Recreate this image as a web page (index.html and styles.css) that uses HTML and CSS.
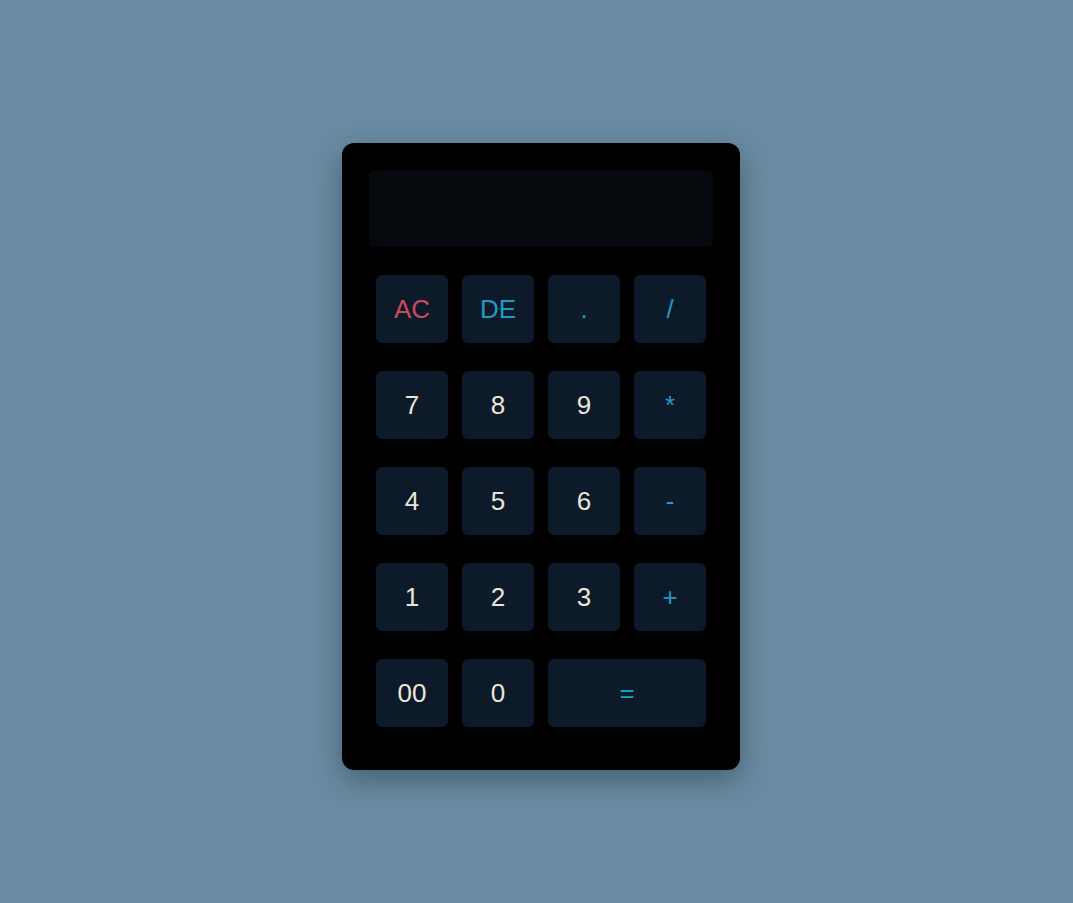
FILE: index.html
```html
<!DOCTYPE html>
<html>
<head>
<meta charset="utf-8">
<link rel="stylesheet" href="styles.css">
</head>
<body>
<div class="page">
  <div class="calculator">
    <div class="display"></div>
    <div class="keys">
      <button class="key clear">AC</button>
      <button class="key op">DE</button>
      <button class="key op">.</button>
      <button class="key op">/</button>
      <button class="key">7</button>
      <button class="key">8</button>
      <button class="key">9</button>
      <button class="key op">*</button>
      <button class="key">4</button>
      <button class="key">5</button>
      <button class="key">6</button>
      <button class="key op">-</button>
      <button class="key">1</button>
      <button class="key">2</button>
      <button class="key">3</button>
      <button class="key op">+</button>
      <button class="key">00</button>
      <button class="key">0</button>
      <button class="key op wide">=</button>
    </div>
  </div>
</div>
</body>
</html>
```
FILE: styles.css
```css
html, body {
  margin: 0;
  padding: 0;
  background: #6a8ca2;
}
.page {
  box-sizing: border-box;
  height: 903px;
  display: flex;
  align-items: center;
  justify-content: center;
  padding: 10px 0 0 9px;
}
.calculator {
  box-sizing: border-box;
  width: 398px;
  height: 627px;
  background: #000;
  border-radius: 12px;
  padding: 27px 27px 42px;
  box-shadow: 0 10px 30px rgba(20, 40, 60, 0.45);
}
.display {
  height: 77px;
  background: #05080c;
  border-radius: 6px;
}
.keys {
  margin: 28px 7px 0;
  display: grid;
  grid-template-columns: repeat(4, 72px);
  grid-auto-rows: 68px;
  column-gap: 14px;
  row-gap: 28px;
}
.key {
  border: none;
  margin: 0;
  padding: 0;
  background: #0d1a2a;
  border-radius: 6px;
  font-family: "Liberation Sans", Arial, sans-serif;
  font-size: 26px;
  color: #ece6d6;
  line-height: 1;
}
.key.op {
  color: #1e9ac6;
}
.key.clear {
  color: #c94b5e;
}
.key.wide {
  grid-column: span 2;
}
```
